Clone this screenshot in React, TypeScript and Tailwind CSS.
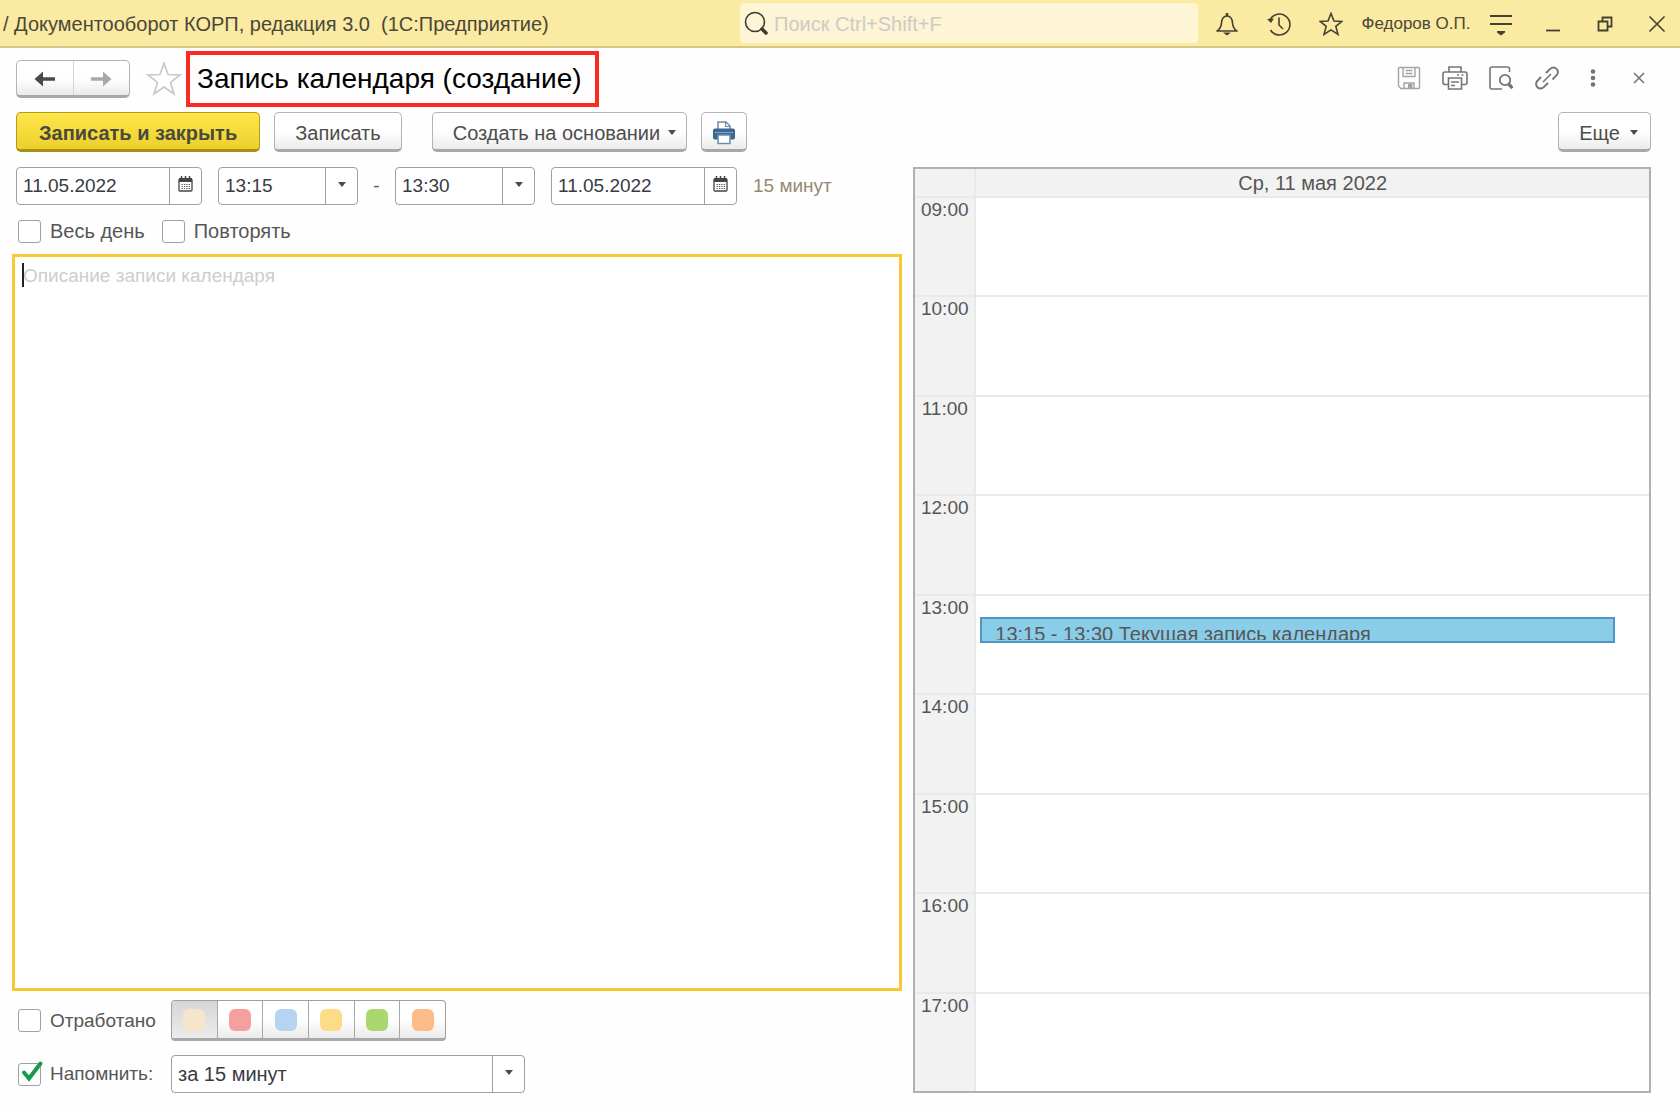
import { useState } from 'react'
import type { ReactNode } from 'react'

const HOURS = ['09:00', '10:00', '11:00', '12:00', '13:00', '14:00', '15:00', '16:00', '17:00']

const COLORS = [
  { id: 'none', label: 'Без цвета', swatch: 'bg-[#f5e6cb]' },
  { id: 'red', label: 'Красный', swatch: 'bg-[#f79e9e]' },
  { id: 'blue', label: 'Синий', swatch: 'bg-[#b7d3f2]' },
  { id: 'yellow', label: 'Желтый', swatch: 'bg-[#fddc87]' },
  { id: 'green', label: 'Зеленый', swatch: 'bg-[#a9d770]' },
  { id: 'orange', label: 'Оранжевый', swatch: 'bg-[#fdbb89]' }
]

const BUTTON =
  'h-10 pt-[3px] border border-[#b4b4b4] border-b-[3px] border-b-[#a8a8a8] rounded-[5px] bg-linear-to-b from-white from-50% to-[#ebebeb] text-xl text-[#4d4d4d] flex items-center justify-center'

function Svg({ children, className = 'size-6' }: { children: ReactNode; className?: string }) {
  return (
    <svg viewBox="0 0 24 24" fill="none" stroke="currentColor" strokeWidth="1.6" className={className} aria-hidden="true">
      {children}
    </svg>
  )
}

function Caret() {
  return (
    <svg viewBox="0 0 8 5" className="w-2 h-[5px]" fill="#4a4a4a" aria-hidden="true">
      <path d="M0 0h8L4 5z" />
    </svg>
  )
}

function CalendarIcon() {
  return (
    <svg viewBox="0 0 15 16" className="w-[15px] h-4" fill="none" aria-hidden="true">
      <rect x="1" y="3" width="13" height="12" rx="1" stroke="#444" strokeWidth="1.3" />
      <path d="M1 2h13v4H1z" fill="#444" />
      <path d="M3.500 0v3M7.500 0v3M11.500 0v3" stroke="#444" strokeWidth="1.5" />
      <path d="M3.500 8.500h8.500M3.500 10.500h8.500M3.500 12.500h8.500" stroke="#555" strokeWidth="1.200" strokeDasharray="1.300 1.100" />
    </svg>
  )
}

function HeaderButton({ title, children }: { title: string; children: ReactNode }) {
  return (
    <button title={title} className="w-[46px] h-full pt-px flex items-center justify-center text-[#45412f]">
      {children}
    </button>
  )
}

function ToolButton({ title, children }: { title: string; children: ReactNode }) {
  return (
    <button title={title} className="w-[46px] h-9 flex items-center justify-center text-[#757575]">
      {children}
    </button>
  )
}

function DateField({ label, value, onChange }: { label: string; value: string; onChange: (v: string) => void }) {
  return (
    <div className="w-[186px] h-[38px] flex border border-[#a0a0a0] rounded-[4px] bg-white">
      <input
        aria-label={label}
        value={value}
        onChange={e => onChange(e.target.value)}
        className="min-w-0 flex-1 px-1.5 outline-none text-[#3a3a44]"
      />
      <button title="Выбрать дату" className="w-8 border-l border-[#a0a0a0] flex items-center justify-center pb-1">
        <CalendarIcon />
      </button>
    </div>
  )
}

function SelectField({ id, label, value, className }: { id: string; label?: string; value: string; className: string }) {
  return (
    <div className={`${className} h-[38px] grid border border-[#a0a0a0] rounded-[4px] bg-white`}>
      <select
        id={id}
        aria-label={label}
        defaultValue={value}
        className="col-start-1 row-start-1 w-full appearance-none px-1.5 outline-none text-[#3a3a44]"
      >
        <option>{value}</option>
      </select>
      <span className="col-start-1 row-start-1 justify-self-end w-8 border-l border-[#a0a0a0] flex items-center justify-center pb-1 pointer-events-none">
        <Caret />
      </span>
    </div>
  )
}

function CheckField({ label, checked = false }: { label: string; checked?: boolean }) {
  return (
    <label className="flex items-center gap-[9px] leading-6">
      <span className="relative size-[23px]">
        <input
          type="checkbox"
          defaultChecked={checked}
          className="peer block size-[23px] appearance-none border border-[#a0a0a0] rounded-[3px] bg-white"
        />
        <svg
          viewBox="0 0 26 24"
          className="hidden peer-checked:block absolute -top-[3px] left-0 w-[26px] h-6 pointer-events-none"
          fill="none"
          aria-hidden="true"
        >
          <path d="M6 12.500L11 18.500L22.500 3.500" stroke="#179a4b" strokeWidth="4" strokeLinecap="round" />
        </svg>
      </span>
      {label}
    </label>
  )
}

export default function App() {
  const [start, setStart] = useState('11.05.2022')
  const [end, setEnd] = useState('11.05.2022')
  const [text, setText] = useState('')
  const [color, setColor] = useState('none')

  return (
    <div className="min-h-screen flex flex-col bg-[#fefefe] font-['Liberation_Sans',Arial,sans-serif] text-[19px] leading-6 text-[#565656]">
      {/* Window header */}
      <header className="h-12 flex items-center gap-1.5 bg-[#faeaa2] border-b-2 border-[#d8c784]">
        <div className="flex-1 min-w-0 pl-[3px] pt-0.5 text-xl whitespace-pre truncate text-[#4b473a]">
          / Документооборот КОРП, редакция 3.0  (1С:Предприятие)
        </div>
        <label className="w-[458px] h-10 flex items-center gap-1.5 pl-1 rounded-[4px] bg-[#fdf5d5] text-[#3d3a2e]">
          <Svg>
            <circle cx="11" cy="11" r="9.500" />
            <path d="M18 18l4 4" strokeWidth="3.500" strokeLinecap="round" />
          </Svg>
          <input
            aria-label="Поиск"
            placeholder="Поиск Ctrl+Shift+F"
            className="flex-1 min-w-0 pt-0.5 text-xl outline-none placeholder:text-[#cfcac5]"
          />
        </label>
        <HeaderButton title="Уведомления">
          <Svg>
            <path d="M2 19h20c-3.500-2-4.200-4.500-4.500-8C17.200 6.500 15.500 4 12 4S6.800 6.500 6.500 11c-.3 3.500-1 6-4.500 8z" strokeLinejoin="round" />
            <path d="M12 1v3" strokeWidth="2.500" />
            <path d="M8 20.500h8L12 23.500z" fill="currentColor" stroke="none" />
          </Svg>
        </HeaderButton>
        <HeaderButton title="История">
          <Svg>
            <path d="M3.200 7.500A10.500 10.500 0 1 1 3.500 18" />
            <path d="M12 5.500V13l4 4" />
            <path d="M0 7l7-.5L4 11z" fill="currentColor" stroke="none" />
          </Svg>
        </HeaderButton>
        <HeaderButton title="Избранное">
          <Svg>
            <path d="M12 1.500l3 7.500 8 .4-6.200 5 2.200 8-7-4.500-7 4.500 2.200-8L1 9.400 9 9z" />
          </Svg>
        </HeaderButton>
        <button className="w-28 pt-0.5 text-[17px] text-center whitespace-nowrap text-[#4b473a]">Федоров О.П.</button>
        <HeaderButton title="Настройки">
          <Svg>
            <path d="M1 4h22M1 12h22" strokeWidth="1.800" />
            <path d="M8 19h8v1.500L12 23.500l-4-3z" fill="currentColor" stroke="none" />
          </Svg>
        </HeaderButton>
        <HeaderButton title="Свернуть">
          <Svg>
            <path d="M5 18.500h14" strokeWidth="1.800" />
          </Svg>
        </HeaderButton>
        <HeaderButton title="Развернуть">
          <Svg>
            <path d="M5.500 9.500h9v9h-9zM9.500 9V5.500h9v9H15" strokeWidth="1.800" />
          </Svg>
        </HeaderButton>
        <HeaderButton title="Закрыть">
          <Svg>
            <path d="M4.500 4.500l15 15M19.500 4.500l-15 15" />
          </Svg>
        </HeaderButton>
      </header>

      {/* Form title */}
      <div className="flex items-center pl-4 pr-[18px] pt-[3px]">
        <div className="w-[114px] h-[38px] flex border border-[#b4b4b4] border-b-[3px] border-b-[#a8a8a8] rounded-[5px] bg-linear-to-b from-white from-50% to-[#ebebeb]">
          <button title="Назад" className="flex-1 flex items-center justify-center pt-px text-[#4a4a4a]">
            <Svg>
              <path d="M22 12H6" strokeWidth="3.500" />
              <path d="M1.500 12L10 4.500v15z" fill="currentColor" stroke="none" />
            </Svg>
          </button>
          <button title="Вперед" className="flex-1 flex items-center justify-center pt-px border-l border-[#d4d4d4] text-[#a8a8a8]">
            <Svg>
              <path d="M2 12h16" strokeWidth="3.500" />
              <path d="M22.500 12L14 4.500v15z" fill="currentColor" stroke="none" />
            </Svg>
          </button>
        </div>
        <button title="Добавить в избранное" className="ml-4 text-[#c3c9ce]">
          <Svg className="size-9">
            <path d="M12 1.500l2.700 7.500 8 .3-6.400 5 2.400 7.700-6.700-4.700L5.300 22l2.400-7.700-6.400-5 8-.3z" strokeWidth="1.100" />
          </Svg>
        </button>
        <h1 className="ml-1 h-14 pl-[7px] pr-[13px] flex items-center border-[4px] border-[#fb2b20] text-[28px] text-black whitespace-nowrap">
          Запись календаря (создание)
        </h1>
        <div className="ml-auto flex pb-[3px]">
          <ToolButton title="Сохранить">
            <Svg className="size-6 text-[#a3a3a3]">
              <path d="M2.500 1.500h19a1 1 0 0 1 1 1v19a1 1 0 0 1-1 1H4l-2.500-2.500V2.500a1 1 0 0 1 1-1z" strokeWidth="1.400" />
              <path d="M6 2v8.500h12V2M8.500 4.500h7M8.500 7.500h7M7 22v-5h10v5" strokeWidth="1.400" />
              <path d="M11 18h4.500v4H11z" fill="currentColor" stroke="none" />
            </Svg>
          </ToolButton>
          <ToolButton title="Печать">
            <Svg className="h-6 w-[26px]">
              <path d="M6 6V1h12v5M5.500 18.500H2a2 2 0 0 1-2-2V8a2 2 0 0 1 2-2h20a2 2 0 0 1 2 2v8.500a2 2 0 0 1-2 2h-3.500" />
              <path d="M5.500 12h13v11h-13zM8 16h8M8 19.500h4M14 9h2M18.500 9h2" />
            </Svg>
          </ToolButton>
          <ToolButton title="Просмотр">
            <Svg>
              <path d="M13 23H3a2 2 0 0 1-2-2V3a2 2 0 0 1 2-2h15.500a2 2 0 0 1 2 2v3" />
              <circle cx="16" cy="14" r="5.200" strokeWidth="1.800" />
              <path d="M19.500 18l4 4" strokeWidth="3.200" />
            </Svg>
          </ToolButton>
          <ToolButton title="Получить ссылку">
            <Svg>
              <path d="M8 16l8-8" />
              <path d="M11 7l4.200-4.200a4.500 4.500 0 0 1 6.400 0 4.500 4.500 0 0 1 0 6.400L17.500 13.500" strokeWidth="1.900" />
              <path d="M6 11l-3.600 3.800a4.500 4.500 0 0 0 0 6.400 4.500 4.500 0 0 0 6.400 0L13 17" strokeWidth="1.900" />
            </Svg>
          </ToolButton>
          <ToolButton title="Еще">
            <Svg>
              <g fill="currentColor" stroke="none">
                <circle cx="12" cy="5.500" r="2.300" />
                <circle cx="12" cy="12" r="2.300" />
                <circle cx="12" cy="18.500" r="2.300" />
              </g>
            </Svg>
          </ToolButton>
          <ToolButton title="Закрыть форму">
            <Svg>
              <path d="M7 7l10 10M17 7L7 17" />
            </Svg>
          </ToolButton>
        </div>
      </div>

      {/* Command bar */}
      <div className="flex items-center pl-4 pr-[29px] pt-[5px]">
        <button className="h-10 px-[22px] pt-[3px] border border-[#b59b1c] border-b-[3px] border-b-[#a98f1a] rounded-[5px] bg-linear-to-b from-[#ffe64a] to-[#ecd02c] text-xl font-bold text-[#4a4a3c] whitespace-nowrap">
          Записать и закрыть
        </button>
        <button className={`${BUTTON} ml-[14px] px-5`}>Записать</button>
        <button className={`${BUTTON} ml-[30px] pl-5 pr-2.5 gap-2 whitespace-nowrap`}>
          Создать на основании
          <Caret />
        </button>
        <button title="Печать" className={`${BUTTON} ml-[14px] w-[46px]`}>
          <svg viewBox="0 0 24 24" className="size-6" fill="none" aria-hidden="true">
            <path d="M6 9V1h8l4 4v4" fill="#fff" stroke="#6d8cab" strokeWidth="1.500" />
            <path d="M13.500 1v4.500H18" stroke="#6d8cab" strokeWidth="1.200" />
            <rect x="1" y="7.500" width="22" height="11" rx="2" fill="#3a6792" />
            <path d="M3 11.500h18" stroke="#7ea2c4" strokeWidth="1.200" />
            <path d="M6 14h12v8.500H6z" fill="#fff" stroke="#6d8cab" strokeWidth="1.500" />
          </svg>
        </button>
        <button className={`${BUTTON} ml-auto w-[93px] pl-2 gap-2.5`}>
          Еще
          <Caret />
        </button>
      </div>

      <main className="flex-1 flex pl-3 pr-[29px] pt-[15px] pb-[15px]">
        {/* Event form */}
        <form className="flex-[893_1_0%] flex flex-col" onSubmit={e => e.preventDefault()}>
          <div className="flex items-center pl-1">
            <DateField label="Дата начала" value={start} onChange={setStart} />
            <SelectField id="start-time" label="Время начала" value="13:15" className="ml-4 w-[140px]" />
            <span className="w-[37px] text-center">-</span>
            <SelectField id="end-time" label="Время окончания" value="13:30" className="w-[140px] mr-4" />
            <DateField label="Дата окончания" value={end} onChange={setEnd} />
            <span className="ml-4 text-[#958b70]">15 минут</span>
          </div>

          <div className="flex gap-[17px] pl-1.5 pt-[14px] pb-[11px] text-xl">
            <CheckField label="Весь день" />
            <CheckField label="Повторять" />
          </div>

          <div className="relative flex-1 flex">
            <textarea
              aria-label="Описание"
              value={text}
              onChange={e => setText(e.target.value)}
              placeholder="Описание записи календаря"
              className="flex-1 resize-none border-[3px] border-[#fac834] bg-white px-2 py-[7px] outline-none placeholder:text-[#cdcdcd]"
            />
            {/* insertion point of the empty field */}
            {!text && <span className="absolute left-[10px] top-[9px] w-0.5 h-6 bg-[#222] pointer-events-none" />}
          </div>

          <div className="grid grid-cols-[159px_1fr] items-center gap-y-[14px] pt-[9px]">
            <div className="pl-1.5">
              <CheckField label="Отработано" />
            </div>
            <div className="w-[275px] h-[41px] flex border border-[#a0a0a0] border-b-[3px] border-b-[#a8a8a8] rounded-[4px] bg-linear-to-b from-white from-50% to-[#ebebeb] overflow-hidden divide-x divide-[#a8a8a8]">
              {COLORS.map(c => (
                <label
                  key={c.id}
                  className={`flex-1 flex items-center justify-center ${
                    color === c.id ? 'bg-linear-to-b from-[#d6d6d6] to-[#ececec]' : ''
                  }`}
                >
                  <input
                    type="radio"
                    name="color"
                    aria-label={c.label}
                    checked={color === c.id}
                    onChange={() => setColor(c.id)}
                    className={`size-[22px] appearance-none rounded-[6px] ${c.swatch}`}
                  />
                </label>
              ))}
            </div>
            <div className="pl-1.5">
              <CheckField label="Напомнить:" checked />
            </div>
            <SelectField id="remind" label="Срок напоминания" value="за 15 минут" className="w-[354px] text-xl" />
          </div>
        </form>

        {/* Day view */}
        <section className="ml-[11px] flex-[736_1_0%] flex flex-col border-2 border-[#b0b0b0] bg-white">
          <div className="h-[27px] flex bg-[#f2f2f2]">
            <div className="w-[61px] border-r-2 border-[#e9e9e9]" />
            <div className="flex-1 text-center text-xl leading-7">Ср, 11 мая 2022</div>
          </div>
          {HOURS.map(hour => (
            <div key={hour} className="flex-1 flex border-t-2 border-[#e9e9e9]">
              <div className="w-[61px] border-r-2 border-[#e9e9e9] bg-[#f2f2f2] text-center">{hour}</div>
              <div className="relative flex-1">
                {hour === '13:00' && (
                  <button className="absolute left-1 right-[34px] top-[22%] h-[26px] border-2 border-[#5195c1] bg-[#8acde9] px-[13px] text-xl leading-6 text-left">
                    <span className="block h-[19px] pt-px overflow-hidden whitespace-nowrap">
                      13:15 - 13:30 Текущая запись календаря
                    </span>
                  </button>
                )}
              </div>
            </div>
          ))}
        </section>
      </main>
    </div>
  )
}
